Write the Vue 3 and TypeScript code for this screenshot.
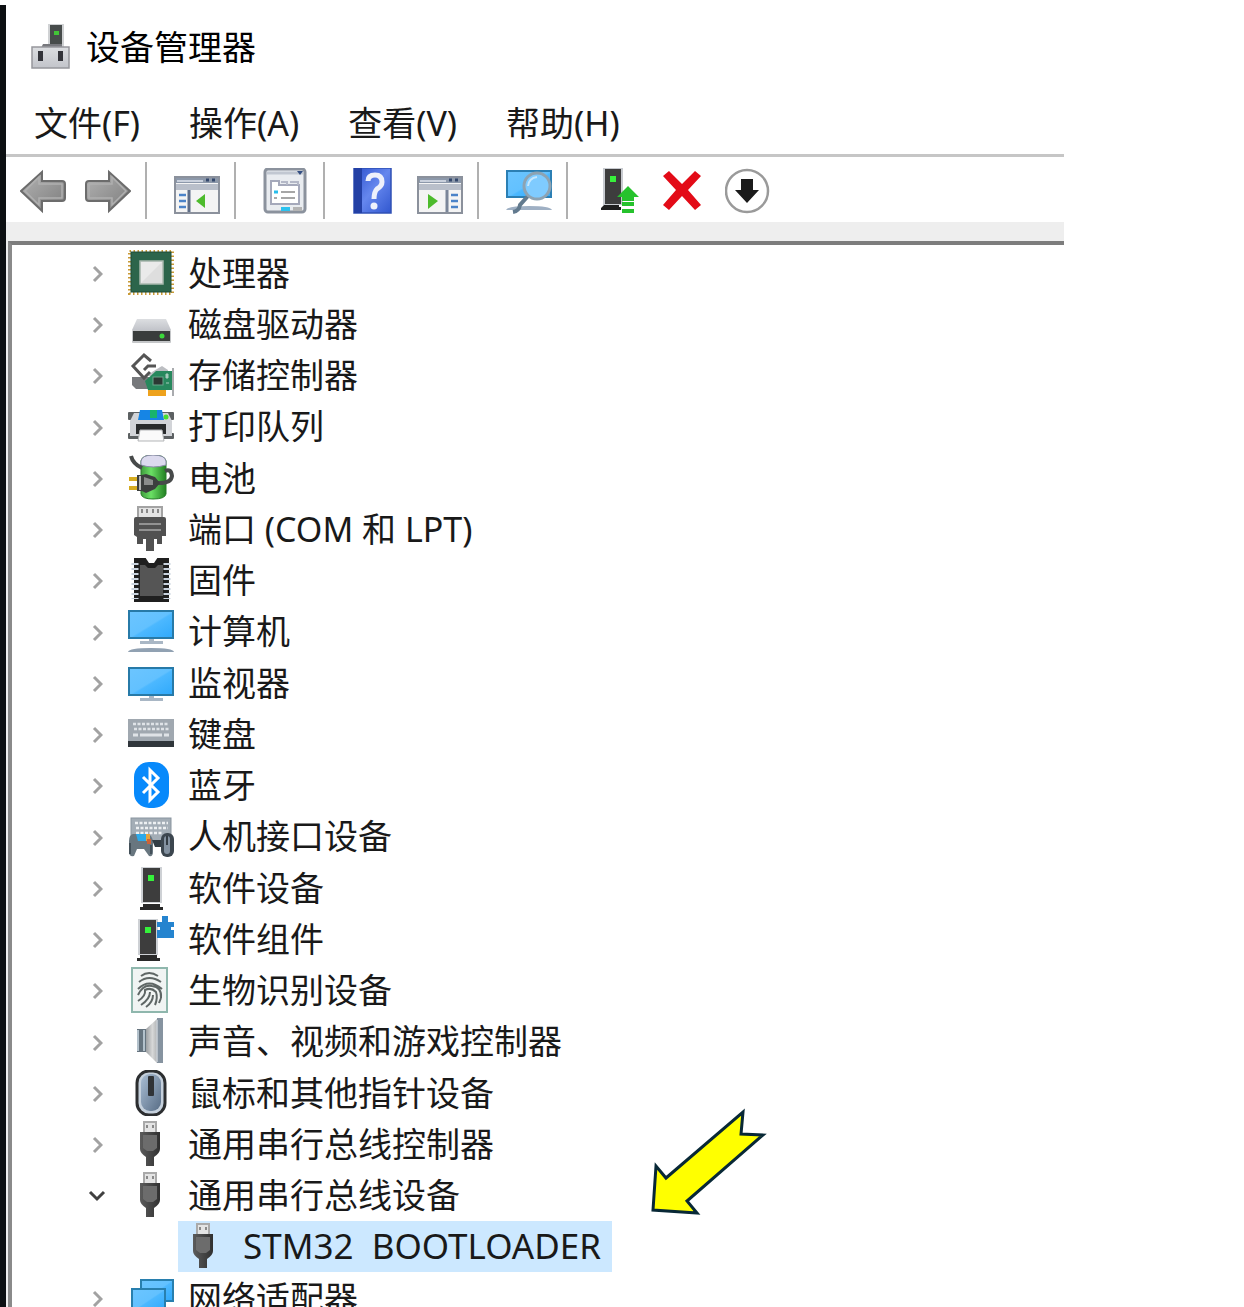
<script setup lang="ts">
import { ref } from 'vue'

interface Device {
  label: string
  icon: string
  open?: boolean
  child?: boolean
}

interface Tool {
  label: string
  icon: string
}

const menus: string[] = ['文件(F)', '操作(A)', '查看(V)', '帮助(H)']

const toolGroups: Tool[][] = [
  [
    { label: '后退', icon: 'back' },
    { label: '前进', icon: 'forward' },
  ],
  [{ label: '显示/隐藏控制台树', icon: 'console' }],
  [{ label: '属性', icon: 'properties' }],
  [
    { label: '帮助', icon: 'help' },
    { label: '操作窗格', icon: 'actions' },
  ],
  [{ label: '扫描检测硬件改动', icon: 'scan' }],
  [
    { label: '更新驱动程序', icon: 'update' },
    { label: '卸载设备', icon: 'remove' },
    { label: '禁用设备', icon: 'disable' },
  ],
]

const devices: Device[] = [
  { label: '处理器', icon: 'cpu' },
  { label: '磁盘驱动器', icon: 'disk' },
  { label: '存储控制器', icon: 'storage' },
  { label: '打印队列', icon: 'printer' },
  { label: '电池', icon: 'battery' },
  { label: '端口 (COM 和 LPT)', icon: 'port' },
  { label: '固件', icon: 'firmware' },
  { label: '计算机', icon: 'computer' },
  { label: '监视器', icon: 'monitor' },
  { label: '键盘', icon: 'keyboard' },
  { label: '蓝牙', icon: 'bluetooth' },
  { label: '人机接口设备', icon: 'hid' },
  { label: '软件设备', icon: 'software' },
  { label: '软件组件', icon: 'component' },
  { label: '生物识别设备', icon: 'biometric' },
  { label: '声音、视频和游戏控制器', icon: 'sound' },
  { label: '鼠标和其他指针设备', icon: 'mouse' },
  { label: '通用串行总线控制器', icon: 'usb' },
  { label: '通用串行总线设备', icon: 'usb', open: true },
  { label: 'STM32  BOOTLOADER', icon: 'usb', child: true },
  { label: '网络适配器', icon: 'network' },
]

const selected = ref('STM32  BOOTLOADER')
</script>

<template>
  <div class="desktop">
    <svg class="sprites" aria-hidden="true">
      <defs>
        <linearGradient id="g-screen" x1="0" y1="0" x2="1" y2="1">
          <stop offset="0" stop-color="#6cc5ff" />
          <stop offset=".5" stop-color="#62c1ff" />
          <stop offset=".54" stop-color="#4cb8ff" />
          <stop offset="1" stop-color="#2fa9fb" />
        </linearGradient>
        <linearGradient id="g-arrow" x1="0" y1="0" x2="1" y2="1">
          <stop offset="0" stop-color="#b4b4b4" />
          <stop offset="1" stop-color="#7c7c7c" />
        </linearGradient>
        <linearGradient id="g-metal" x1="0" y1="0" x2="0" y2="1">
          <stop offset="0" stop-color="#dcdee1" />
          <stop offset="1" stop-color="#c2c4ca" />
        </linearGradient>
        <linearGradient id="g-dark" x1="0" y1="0" x2="1" y2="0">
          <stop offset="0" stop-color="#5c5c5c" />
          <stop offset="1" stop-color="#303030" />
        </linearGradient>
        <linearGradient id="g-green" x1="0" y1="0" x2="1" y2="0">
          <stop offset="0" stop-color="#3f9c3d" />
          <stop offset=".4" stop-color="#6be065" />
          <stop offset="1" stop-color="#228022" />
        </linearGradient>
        <linearGradient id="g-help" x1="0" y1="0" x2="1" y2="1">
          <stop offset="0" stop-color="#2c50cc" />
          <stop offset=".5" stop-color="#6587ee" />
          <stop offset="1" stop-color="#3157cf" />
        </linearGradient>
        <linearGradient id="g-cone" x1="0" y1="0" x2="1" y2="0">
          <stop offset="0" stop-color="#9c9fa2" />
          <stop offset=".4" stop-color="#d7d8d8" />
          <stop offset="1" stop-color="#8b8e91" />
        </linearGradient>
        <linearGradient id="g-mouse" x1="0" y1="0" x2="1" y2="1">
          <stop offset="0" stop-color="#a9bdd3" />
          <stop offset="1" stop-color="#586d86" />
        </linearGradient>
      </defs>

      <symbol id="back" viewBox="0 0 46 46">
        <path d="M1 23 22 4V13H42Q45 13 45 16V30Q45 33 42 33H22V43Z" fill="url(#g-arrow)" stroke="#6c6c6c" stroke-width="2" />
        <path d="M5 23 19 9V16H42V30H19V37Z" fill="none" stroke="#b0b0b0" stroke-width="1.5" />
      </symbol>
      <symbol id="forward" viewBox="0 0 46 46">
        <path d="M45 23 24 4V13H4Q1 13 1 16V30Q1 33 4 33H24V43Z" fill="url(#g-arrow)" stroke="#6c6c6c" stroke-width="2" />
        <path d="M41 23 27 9V16H4V30H27V37Z" fill="none" stroke="#b0b0b0" stroke-width="1.5" />
      </symbol>
      <symbol id="console" viewBox="0 0 46 46">
        <rect x="1" y="9" width="44" height="36" fill="#f4f4f4" stroke="#8b919c" stroke-width="2" />
        <rect x="2" y="10" width="42" height="5" fill="#8c98aa" />
        <path d="M3 13H29" stroke="#dfe5ee" stroke-width="1.5" />
        <path d="M32 12H35M38 12H41" stroke="#34486c" stroke-width="3" />
        <rect x="2" y="16" width="42" height="6" fill="#b9bfca" />
        <path d="M15 22V44" stroke="#5f6e88" stroke-width="3" />
        <path d="M5 27H12M5 33H12M5 39H12" stroke="#4b83c8" stroke-width="2.5" />
        <path d="M31 26V40L22 33Z" fill="#4dbb2c" />
      </symbol>
      <symbol id="properties" viewBox="0 0 46 46">
        <rect x="2" y="1" width="40" height="43" rx="3" fill="#e9ecf0" stroke="#8b929d" stroke-width="3" />
        <path d="M4 5H40" stroke="#c1c7d1" stroke-width="3" />
        <path d="M34 3H40L37 7Z" fill="#334e82" />
        <path d="M8 13H16V17H36V36H8Z" fill="#fff" stroke="#a5a9bb" stroke-width="2" />
        <path d="M18 14H24V17M27 14H35V17" fill="none" stroke="#b4b8c7" stroke-width="2" />
        <path d="M11 24H15" stroke="#28bceb" stroke-width="3" />
        <path d="M11 30H14" stroke="#aaa" stroke-width="2" />
        <path d="M18 24H32M18 30H32" stroke="#a6a6a6" stroke-width="2" />
        <rect x="18" y="39" width="9" height="4" fill="#2cc2ef" />
        <rect x="30" y="39" width="9" height="4" fill="#b4b4b4" />
      </symbol>
      <symbol id="help" viewBox="0 0 46 46">
        <rect x="2" y="0" width="37" height="45" fill="url(#g-help)" stroke="#3151b5" stroke-width="1.5" />
        <rect x="2" y="0" width="8" height="45" fill="#2340a5" />
        <path d="M16 13Q16 7 23 7Q30 7 30 14Q30 18 25 21Q22 24 22 31" fill="none" stroke="#eef1fb" stroke-width="5" />
        <circle cx="22" cy="38" r="3.5" fill="#eef1fb" />
      </symbol>
      <symbol id="actions" viewBox="0 0 46 46">
        <rect x="1" y="9" width="44" height="36" fill="#f4f4f4" stroke="#8b919c" stroke-width="2" />
        <rect x="2" y="10" width="42" height="5" fill="#8c98aa" />
        <path d="M3 13H29" stroke="#dfe5ee" stroke-width="1.5" />
        <path d="M32 12H35M38 12H41" stroke="#34486c" stroke-width="3" />
        <rect x="2" y="16" width="42" height="6" fill="#b9bfca" />
        <path d="M30 22V44" stroke="#7b8699" stroke-width="3" />
        <path d="M34 27H41M34 33H41M34 39H41" stroke="#4b83c8" stroke-width="2.5" />
        <path d="M11 26V41L21 33Z" fill="#4dbb2c" />
      </symbol>
      <symbol id="scan" viewBox="0 0 46 46">
        <rect x="1" y="3" width="44" height="26" fill="url(#g-screen)" stroke="#2b7fb4" stroke-width="2" />
        <path d="M0 42Q2 38 23 38Q44 38 46 42Z" fill="#9fb0c4" />
        <path d="M22 28 14 37Q13 43 7 44" fill="none" stroke="#627a8e" stroke-width="4" />
        <circle cx="31" cy="18" r="13" fill="#7fcbff" stroke="#8da3b3" stroke-width="3" />
        <path d="M22 18Q23 10 31 9" fill="none" stroke="#c6e8ff" stroke-width="2" />
      </symbol>
      <symbol id="update" viewBox="0 0 46 46">
        <rect x="8" y="0" width="20" height="37" fill="#c8cbd0" />
        <rect x="10" y="1" width="16" height="35" fill="#3d3d3d" />
        <rect x="15" y="8" width="6" height="6" fill="#37f03b" />
        <path d="M9 37H24V39H26V42H6V40Z" fill="#1e1e1e" />
        <path d="M33 18 44 29H39V33H27V29H22Z" fill="#26c22d" />
        <path d="M27 36H39M27 43H39" stroke="#26c22d" stroke-width="4" />
      </symbol>
      <symbol id="remove" viewBox="0 0 46 46">
        <path d="M3 8 9 3 22 16 35 3 41 8 28 22 41 37 35 42 22 28 9 42 3 37 16 22Z" fill="#e30b17" />
      </symbol>
      <symbol id="disable" viewBox="0 0 46 46">
        <circle cx="22" cy="23" r="21" fill="#fff" stroke="#9a9a9a" stroke-width="2.5" />
        <path d="M16 11H28V22H34L22 35 10 22H16Z" fill="#1b1b1b" />
      </symbol>

      <symbol id="manager" viewBox="0 0 46 46">
        <path d="M18 0H34V23H18Z" fill="#d0d2d4" />
        <path d="M20 1H32V22H20Z" fill="#474c4b" />
        <rect x="24" y="7" width="5" height="4" fill="#42c637" />
        <path d="M13 20H32V24H11Z" fill="#77787d" />
        <rect x="2" y="23" width="37" height="21" fill="url(#g-metal)" stroke="#96979c" stroke-width="1.5" />
        <rect x="8" y="27" width="5" height="10" fill="#33343a" />
        <rect x="28" y="27" width="5" height="10" fill="#33343a" />
      </symbol>

      <symbol id="cpu" viewBox="0 0 46 46">
        <rect x="1.5" y="0.5" width="43" height="43" fill="none" stroke="#c99a36" stroke-width="3" stroke-dasharray="1.5 2.5" />
        <rect x="3" y="2" width="40" height="40" fill="#2c654b" stroke="#1f4c38" />
        <rect x="12" y="11" width="23" height="23" fill="#dedede" stroke="#a8b8ae" stroke-width="1.5" />
        <path d="M13 33V12H34Z" fill="#eaeaea" />
      </symbol>
      <symbol id="disk" viewBox="0 0 46 46">
        <path d="M9 18H38L43 29H4Z" fill="url(#g-metal)" />
        <rect x="4" y="29" width="39" height="13" rx="1" fill="#c4c6c8" />
        <rect x="5" y="30" width="37" height="10" fill="#3a3d3c" />
        <circle cx="34" cy="35" r="2.5" fill="#3bd83b" />
      </symbol>
      <symbol id="storage" viewBox="0 0 46 46">
        <path d="M4 25H21V37H8L4 33Z" fill="#77797c" />
        <path d="M24 20 34 14 40 18V24H20Z" fill="#bcbec2" />
        <path d="M23 9 16 3 5 14 16 26 22 20" fill="none" stroke="#555" stroke-width="3" />
        <path d="M28 14H20L16 18" fill="none" stroke="#555" stroke-width="3" />
        <path d="M17 29 28 19H44V38H20Z" fill="#27885d" />
        <rect x="25" y="25" width="10" height="8" fill="#2c3934" stroke="#6aa68c" />
        <path d="M38 22H40V26H38ZM38 31H41" fill="#a8cabc" stroke="#a8cabc" />
        <rect x="20" y="38" width="18" height="6" fill="#eea21d" />
        <path d="M45 16V44" stroke="#a9abae" stroke-width="2" />
      </symbol>
      <symbol id="printer" viewBox="0 0 46 46">
        <rect x="0" y="9" width="46" height="8" rx="1" fill="#5c6062" />
        <rect x="0" y="30" width="46" height="6" rx="1" fill="#5c6062" />
        <path d="M6 10H40L44 18V33H2V18Z" fill="#d2d4d8" />
        <path d="M12 7H34L36 17H10Z" fill="#1685e5" />
        <path d="M22 7H29V15H22Z" fill="#18b46c" />
        <circle cx="38" cy="14" r="2.5" fill="#47df31" />
        <rect x="8" y="21" width="30" height="10" fill="#292b2c" />
        <path d="M12 27H34L36 38H10Z" fill="#fafafa" stroke="#b3b5b7" />
      </symbol>
      <symbol id="battery" viewBox="0 0 46 46">
        <path d="M13 6Q14 0 25 0Q37 0 38 6V39Q37 44 25 44Q14 44 13 39Z" fill="url(#g-green)" stroke="#277c29" />
        <path d="M13 6Q14 0 25 0Q37 0 38 6V10Q25 14 13 10Z" fill="#dcdaee" stroke="#8a88a8" />
        <path d="M3 1Q5 9 14 13M28 28Q43 29 44 21Q43 13 37 16" fill="none" stroke="#474a4a" stroke-width="4" />
        <path d="M1 24H11M1 33H11" stroke="#d6ac20" stroke-width="4" />
        <path d="M9 20H14L18 19 27 22 32 28 27 34 18 38 14 36H9Z" fill="#3c3f3e" />
        <path d="M16 22 25 25V30H16Z" fill="#8b8d8c" />
        <path d="M12 21V35" stroke="#b5b7b6" stroke-width="2" />
      </symbol>
      <symbol id="port" viewBox="0 0 46 46">
        <rect x="10" y="1" width="24" height="12" fill="#e3e3e3" stroke="#a3a3a3" stroke-width="2" />
        <path d="M14 3V7M19 3V7M25 3V7M30 3V7" stroke="#888" stroke-width="2" />
        <path d="M8 11H36Q38 11 38 13V30H34V38H29V33H26V45H18V33H15V38H9V31L6 29V13Q6 11 8 11Z" fill="#515151" />
        <path d="M11 18H33M11 24H33" stroke="#929292" stroke-width="2" />
      </symbol>
      <symbol id="firmware" viewBox="0 0 46 46">
        <rect x="6" y="1" width="35" height="44" fill="#1f1f1f" />
        <path d="M17 0H30L26 6H21Z" fill="#fff" />
        <path d="M12 8H17L20 11H27L30 8H35V39H12Z" fill="#555" />
        <path d="M7 6V42M39 6V42" stroke="#c9d3de" stroke-width="7" stroke-dasharray="2 3" />
      </symbol>
      <symbol id="computer" viewBox="0 0 46 46">
        <rect x="1" y="3" width="44" height="27" fill="url(#g-screen)" stroke="#277aa8" stroke-width="2" />
        <path d="M21 31H26V33H35V36H12V33H21Z" fill="#a9b7c5" />
        <path d="M0 44Q1 40 23 40Q45 40 46 44Z" fill="#91a1b2" />
      </symbol>
      <symbol id="monitor" viewBox="0 0 46 46">
        <rect x="1" y="8" width="44" height="27" fill="url(#g-screen)" stroke="#277aa8" stroke-width="2" />
        <path d="M21 36H26V38H35V41H12V38H21Z" fill="#a9b7c5" />
      </symbol>
      <symbol id="keyboard" viewBox="0 0 46 46">
        <rect x="0" y="8" width="46" height="22" fill="#a0a8b0" />
        <rect x="0" y="30" width="46" height="6" fill="#30363b" />
        <path d="M5 13H41M6 18H41" stroke="#dfe3e7" stroke-width="2.5" stroke-dasharray="3 1.5" />
        <path d="M5 24H10M12 24H34M36 24H41" stroke="#dfe3e7" stroke-width="3" />
      </symbol>
      <symbol id="bluetooth" viewBox="0 0 46 46">
        <rect x="6" y="0" width="35" height="46" rx="15" fill="#0789fb" />
        <path d="M15 15 30 30 22 38V8L30 16 15 31" fill="none" stroke="#fff" stroke-width="3" />
      </symbol>
      <symbol id="hid" viewBox="0 0 46 46">
        <rect x="3" y="5" width="40" height="24" fill="#a3adb6" stroke="#8a959f" />
        <path d="M7 10H40M8 15H40M8 20H35" stroke="#edf0f2" stroke-width="2.5" stroke-dasharray="3 1.5" />
        <path d="M5 21H19Q24 21 25 29V39Q25 44 21 43L16 36H9L6 43Q1 44 1 39V28Q1 22 5 21Z" fill="#68767f" />
        <path d="M2 30V41M23 32V41" stroke="#435059" stroke-width="2" />
        <path d="M8 21H18V28H10Z" fill="#2ca9ea" />
        <path d="M18 21H22V28H18Z" fill="#e4a33f" />
        <path d="M24 27H35V34H27Z" fill="#343e46" />
        <path d="M19 26H23V31H19Z" fill="#cf6237" />
        <rect x="33" y="20" width="13" height="24" rx="6" fill="#3c464f" />
        <rect x="36" y="23" width="6" height="18" rx="3" fill="#8391a0" />
        <path d="M39 23V32" stroke="#333c44" stroke-width="2" />
      </symbol>
      <symbol id="software" viewBox="0 0 46 46">
        <rect x="13" y="2" width="21" height="36" fill="#ced1d5" />
        <rect x="15" y="3" width="17" height="34" fill="#3d3d3d" />
        <rect x="20" y="10" width="6" height="6" fill="#35f23b" />
        <path d="M15 39H32V42H35V45H12V42H15Z" fill="#292929" />
      </symbol>
      <symbol id="component" viewBox="0 0 46 46">
        <rect x="10" y="3" width="20" height="36" fill="#ced1d5" />
        <path d="M34 0H40V6H46V11H43V14H46V22H29V14H32V11H29V6H34Z" fill="#2584cf" />
        <rect x="12" y="4" width="16" height="34" fill="#3d3d3d" />
        <rect x="17" y="11" width="6" height="6" fill="#35f23b" />
        <path d="M12 39H29V42H32V45H9V42H12Z" fill="#292929" />
      </symbol>
      <symbol id="biometric" viewBox="0 0 46 46">
        <rect x="4" y="1" width="35" height="44" fill="#f0f4f3" stroke="#8fb7ad" stroke-width="2" />
        <g fill="none" stroke="#5e6665" stroke-width="2">
          <path d="M13 9Q21 3 30 9M11 15Q21 7 33 15M10 22Q21 11 34 22M10 28Q15 17 24 19Q34 20 33 31" />
          <path d="M10 34Q18 29 17 23Q23 20 28 25Q30 31 27 38M13 38Q22 32 22 25M18 40Q25 35 25 28M31 36L33 31" />
        </g>
      </symbol>
      <symbol id="sound" viewBox="0 0 46 46">
        <path d="M9 11H19V34H9Z" fill="#66747f" />
        <path d="M10 12V33M16 12V33" stroke="#b3c1cb" stroke-width="2" />
        <path d="M18 11 29 1H34V45H29L18 34Z" fill="url(#g-cone)" />
        <path d="M29 0H35V45H29Z" fill="#8693a0" />
        <path d="M29 2V44" stroke="#c8cfd6" stroke-width="1.5" />
      </symbol>
      <symbol id="mouse" viewBox="0 0 46 46">
        <rect x="9" y="1" width="28" height="44" rx="12" fill="#c5d0dc" stroke="#2c2e30" stroke-width="3" />
        <rect x="13" y="4" width="20" height="37" rx="9" fill="url(#g-mouse)" />
        <rect x="20" y="6" width="6" height="20" rx="1" fill="#303337" />
      </symbol>
      <symbol id="usb" viewBox="0 0 46 46">
        <rect x="16" y="1" width="12" height="12" fill="#e4e4e4" stroke="#aaa" stroke-width="2" />
        <path d="M19 4V7M25 4V7" stroke="#8a8a8a" stroke-width="2" />
        <path d="M12 11H32V28Q32 32 26 36V45H18V36Q12 32 12 28Z" fill="url(#g-dark)" />
        <path d="M15 14H29V27L25 30H19L15 27Z" fill="#6c6c6c" />
      </symbol>
      <symbol id="network" viewBox="0 0 46 46">
        <rect x="13" y="5" width="32" height="21" fill="url(#g-screen)" stroke="#287fae" stroke-width="2" />
        <rect x="4" y="14" width="33" height="22" fill="url(#g-screen)" stroke="#287fae" stroke-width="2" />
        <path d="M18 37H24V39H30V42H12V39H18Z" fill="#a9b7c5" />
      </symbol>
    </svg>

    <main class="window">
      <header class="title-bar">
        <svg class="icon" aria-hidden="true"><use href="#manager" /></svg>
        <h1>设备管理器</h1>
      </header>

      <nav class="menu-bar">
        <button v-for="menu in menus" :key="menu" type="button">{{ menu }}</button>
      </nav>

      <div class="toolbar" role="toolbar">
        <template v-for="(group, index) in toolGroups" :key="index">
          <span v-if="index > 0" class="divider"></span>
          <button v-for="tool in group" :key="tool.icon" type="button" :aria-label="tool.label">
            <svg class="icon" aria-hidden="true"><use :href="'#' + tool.icon" /></svg>
          </button>
        </template>
      </div>

      <div class="pane">
        <ul class="tree" role="tree">
          <li
            v-for="device in devices"
            :key="device.label"
            class="row"
            :class="{ child: device.child }"
            role="treeitem"
            :aria-level="device.child ? 2 : 1"
          >
            <button
              v-if="!device.child"
              type="button"
              class="expander"
              :class="{ open: device.open }"
              :aria-label="device.label"
              :aria-expanded="!!device.open"
            >
              <svg v-if="device.open" width="18" height="12" viewBox="0 0 18 12">
                <path d="M2 2 9 9 16 2" fill="none" stroke="currentColor" stroke-width="3" />
              </svg>
              <svg v-else width="12" height="18" viewBox="0 0 12 18">
                <path d="M3 2 10 9 3 16" fill="none" stroke="currentColor" stroke-width="3" />
              </svg>
            </button>
            <button
              type="button"
              class="item"
              :class="{ selected: device.label === selected }"
              @click="selected = device.label"
            >
              <svg class="icon" aria-hidden="true"><use :href="'#' + device.icon" /></svg>
              <span>{{ device.label }}</span>
            </button>
          </li>
        </ul>
      </div>
    </main>

    <svg class="pointer" viewBox="0 0 120 112" aria-hidden="true">
      <path
        d="M95 8 93 30 115 31 39 97 49 109 5 106 8 62 18 74Z"
        fill="#ffff00"
        stroke="#082836"
        stroke-width="3"
      />
    </svg>
  </div>
</template>

<style>
body {
  margin: 0;
  background: #fff;
}
</style>

<style scoped>
.desktop {
  position: relative;
  display: flex;
  height: 100vh;
  overflow: hidden;
  box-sizing: border-box;
  padding: 5px 180px 0 0;
  font-family: 'Noto Sans', 'Noto Sans CJK SC', sans-serif;
  font-size: 34px;
  line-height: 50px;
  color: #191919;
}

.sprites {
  position: absolute;
  width: 0;
  height: 0;
}

button {
  margin: 0;
  padding: 0;
  border: 0;
  background: none;
  font: inherit;
  color: inherit;
}

svg {
  display: block;
}

.icon {
  flex: none;
  width: 46px;
  height: 46px;
}

.window {
  flex: 1;
  min-width: 0;
  border-left: 6px solid #0c0f12;
}

.title-bar {
  display: flex;
  align-items: center;
  gap: 10px;
  height: 84px;
  padding-left: 24px;
}

h1 {
  margin: 0;
  font: inherit;
  color: #000;
}

.menu-bar {
  display: flex;
  align-items: center;
  gap: 49px;
  height: 63px;
  padding: 2px 0 0 28px;
  border-bottom: 3px solid #c6c6c6;
}

.toolbar {
  display: flex;
  align-items: center;
  gap: 9px;
  height: 63px;
  padding: 2px 0 0 9px;
}

.toolbar button {
  padding: 0 5px;
}

.divider {
  width: 2px;
  height: 57px;
  margin-right: 13px;
  background: #b0b0b0;
}

.pane {
  padding: 19px 0 0 2px;
  background: #eee;
}

.tree {
  margin: 0;
  padding: 2px 0 0 74px;
  border-top: 4px solid #7d7d7d;
  border-left: 4px solid #8a8a8a;
  list-style: none;
  background: #fff;
}

.row {
  display: flex;
  align-items: center;
  height: 51px;
}

.row:nth-child(4n) {
  height: 52px;
}

.expander {
  display: flex;
  align-items: center;
  justify-content: center;
  box-sizing: border-box;
  width: 21px;
  height: 51px;
  margin-right: 18px;
  padding-top: 3px;
  color: #a2a2a2;
}

.expander.open {
  color: #404040;
}

.item {
  display: flex;
  align-items: center;
  gap: 14px;
  height: 51px;
  padding: 0 11px 0 3px;
  white-space: pre;
}

.child {
  padding-left: 92px;
}

.child .item {
  gap: 16px;
  font-size: 35px;
}

.selected {
  background: #cce8ff;
}

.pointer {
  position: absolute;
  left: 648px;
  top: 1104px;
  width: 120px;
  height: 112px;
}
</style>
